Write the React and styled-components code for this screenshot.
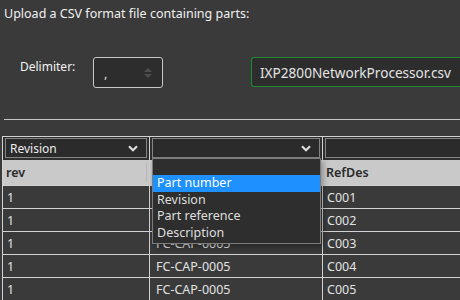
import React from "react";
import styled, { createGlobalStyle } from "styled-components";

const Global = createGlobalStyle`
  html, body { margin: 0; padding: 0; background: #3a3a3a; }
  body { font-family: "Noto Sans", "Open Sans", sans-serif; color: #e6e6e6; overflow: hidden; }
  * { box-sizing: border-box; }
`;

const Page = styled.div`
  width: 460px;
  height: 300px;
  position: relative;
  overflow: hidden;
  background: #3a3a3a;
`;

const Title = styled.div`
  font-size: 12.5px;
  line-height: 16px;
  padding: 6px 0 0 4px;
  color: #f0f0f0;
`;

const FormRow = styled.div`
  display: flex;
  align-items: flex-start;
  margin-top: 35px;
  padding-left: 20px;
`;

const Label = styled.div`
  flex-shrink: 0;
  font-size: 12px;
  line-height: 16px;
  padding-top: 2px;
  width: 73px;
  color: #f2f2f2;
`;

const Spinner = styled.div`
  flex-shrink: 0;
  width: 70px;
  height: 31px;
  border: 1px solid #c8c8c8;
  border-radius: 3px;
  background: #2d2d2d;
  display: flex;
  align-items: center;
  justify-content: space-between;
  padding: 0 9px 0 10px;
  font-size: 13px;
  color: #ddd;
`;

const FileBox = styled.div`
  margin-left: 88px;
  flex: 1;
  min-width: 0;
  height: 30px;
  border: 1px solid #1f8a30;
  border-right: none;
  border-radius: 3px 0 0 3px;
  background: #2d2d2d;
  display: flex;
  align-items: center;
  padding-left: 8px;
  font-size: 13.6px;
  color: #e4e4e4;
  white-space: nowrap;
  overflow: hidden;
`;

const Rule = styled.div`
  margin: 31px 0 0 4px;
  height: 1px;
  background: #c4c4c4;
`;

const TableWrap = styled.div`
  position: relative;
  margin: 16px 0 0 2px;
`;

const Grid = styled.div`
  display: grid;
  grid-template-columns: 146px 172px 200px;
  grid-auto-rows: auto;
  gap: 1px 1px;
  background: #d2d2d2;
  padding: 1px;
  width: 520px;
`;

const SelectCell = styled.div`
  background: #2f2f2f;
  height: 23px;
  padding: 1px 0 0 2px;
`;

const SelectBox = styled.div`
  height: 20px;
  margin-right: 2px;
  border: 1px solid #858585;
  background: #2b2b2b;
  display: flex;
  align-items: center;
  justify-content: space-between;
  padding: 0 8px 0 4px;
  font-size: 12px;
  color: #ececec;
`;

const HeadCell = styled.div`
  background: #c9c9c9;
  height: 25px;
  margin-top: -1px;
  display: flex;
  align-items: center;
  padding-left: 3px;
  font-size: 12.5px;
  font-weight: 600;
  color: #2a2a2a;
  position: relative;
  &::after {
    content: "";
    position: absolute;
    right: 2px;
    top: 3px;
    bottom: 3px;
    width: 1px;
    background: ${(p) => (p.$grip ? "#b8b8b8" : "transparent")};
  }
`;

const Cell = styled.div`
  background: #3a3a3a;
  height: 22px;
  display: flex;
  align-items: center;
  padding-left: ${(p) => p.$pad || 4}px;
  font-size: 12.5px;
  color: #e2e2e2;
`;

const Popup = styled.div`
  position: absolute;
  left: 150px;
  top: 22px;
  width: 169px;
  border: 1px solid #7c7c7c;
  background: #2e2e2e;
  box-shadow: 2px 3px 6px rgba(0, 0, 0, 0.35);
  padding-top: 16px;
  padding-bottom: 1px;
`;

const Option = styled.div`
  height: 16.7px;
  line-height: 16px;
  font-size: 12.5px;
  padding-left: 4px;
  color: ${(p) => (p.$active ? "#ffffff" : "#dedede")};
  background: ${(p) => (p.$active ? "#1e90ff" : "transparent")};
`;

const Chevron = () => (
  <svg width="10" height="7" viewBox="0 0 10 7">
    <path d="M1 1.3 L5 5.3 L9 1.3" fill="none" stroke="#dcdcdc" strokeWidth="2.2" />
  </svg>
);

const SpinArrows = () => (
  <svg width="10" height="12" viewBox="0 0 10 12">
    <path d="M1 5 L5 1 L9 5 Z" fill="#4e4e4e" />
    <path d="M1 7 L5 11 L9 7 Z" fill="#4e4e4e" />
  </svg>
);

const rows = [
  ["1", "FC-CAP-0005", "C001"],
  ["1", "FC-CAP-0005", "C002"],
  ["1", "FC-CAP-0005", "C003"],
  ["1", "FC-CAP-0005", "C004"],
  ["1", "FC-CAP-0005", "C005"],
];

export default function App() {
  return (
    <Page>
      <Global />
      <Title>Upload a CSV format file containing parts:</Title>
      <FormRow>
        <Label>Delimiter:</Label>
        <Spinner>
          <span>,</span>
          <SpinArrows />
        </Spinner>
        <FileBox>IXP2800NetworkProcessor.csv</FileBox>
      </FormRow>
      <Rule />
      <TableWrap>
        <Grid>
          <SelectCell>
            <SelectBox>
              <span>Revision</span>
              <Chevron />
            </SelectBox>
          </SelectCell>
          <SelectCell>
            <SelectBox>
              <span />
              <Chevron />
            </SelectBox>
          </SelectCell>
          <SelectCell>
            <SelectBox>
              <span />
              <Chevron />
            </SelectBox>
          </SelectCell>
          <HeadCell $grip>rev</HeadCell>
          <HeadCell />
          <HeadCell>RefDes</HeadCell>
          {rows.map((r, i) => (
            <React.Fragment key={i}>
              <Cell>{r[0]}</Cell>
              <Cell $pad={6}>{i < 2 ? "" : r[1]}</Cell>
              <Cell>{r[2]}</Cell>
            </React.Fragment>
          ))}
        </Grid>
        <Popup>
          <Option $active>Part number</Option>
          <Option>Revision</Option>
          <Option>Part reference</Option>
          <Option>Description</Option>
        </Popup>
      </TableWrap>
    </Page>
  );
}
